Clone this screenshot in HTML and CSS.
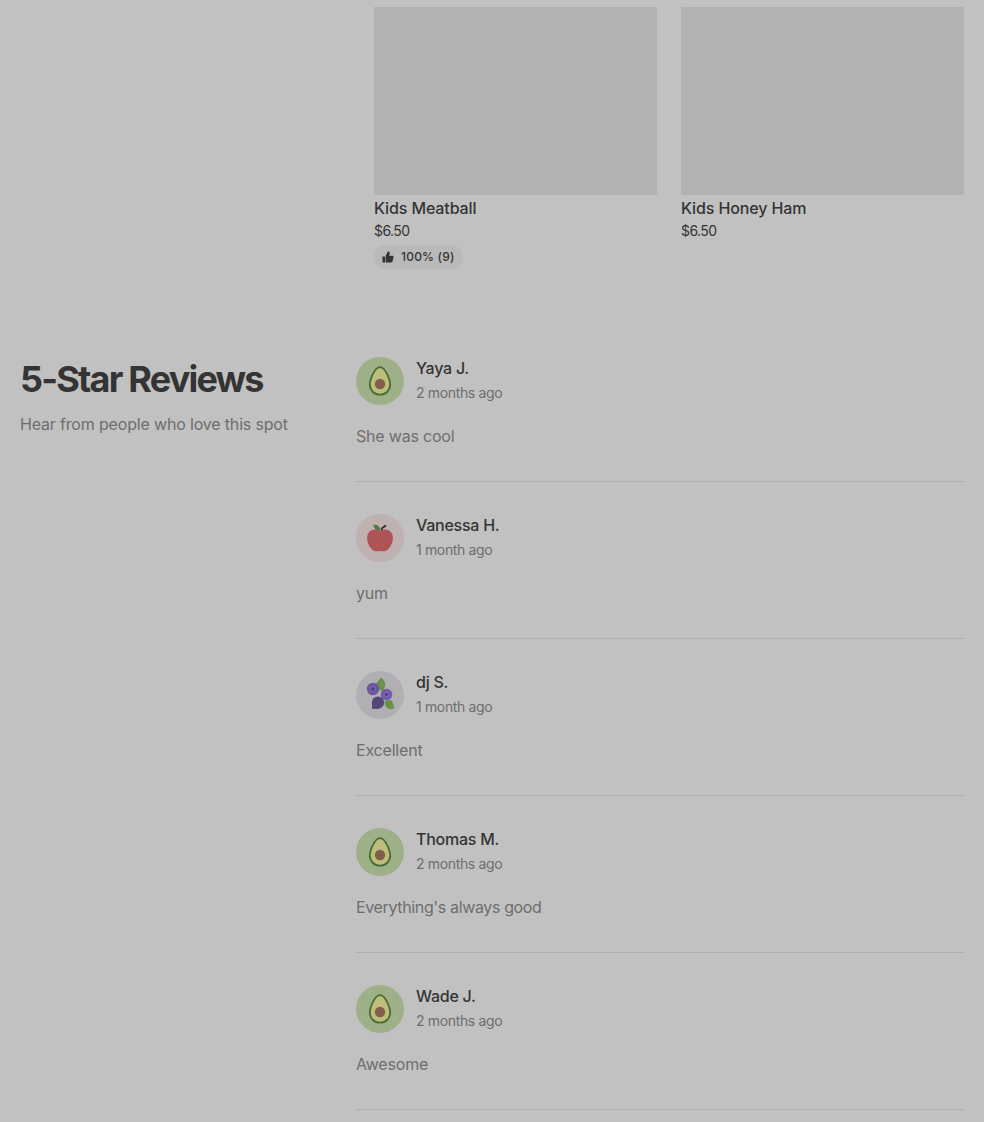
FILE: index.html
```html
<!DOCTYPE html>
<html lang="en">
<head>
    <meta charset="UTF-8">
    <meta name="viewport" content="width=device-width, initial-scale=1.0">
    <title>Store Menu and Reviews</title>
    <link rel="stylesheet" href="styles.css">
</head>
<body>
    <svg class="sprite" aria-hidden="true">
        <symbol id="avocado" viewBox="0 0 48 48">
            <circle cx="24" cy="24" r="24" fill="#9db087"/>
            <path d="M24 10.100c-3.700 0-5.900 4.200-7.600 8-1.400 3.100-2.600 5.600-2.600 9.200 0 6 4.500 10.400 10.200 10.400s10.200-4.400 10.200-10.400c0-3.600-1.200-6.100-2.600-9.200-1.700-3.800-3.900-8-7.600-8z" fill="#bebd7c" stroke="#486f35" stroke-width="1.800"/>
            <circle cx="24" cy="27" r="5.200" fill="#80604a"/>
        </symbol>
        <symbol id="apple" viewBox="0 0 48 48">
            <circle cx="24" cy="24" r="24" fill="#c0b1b1"/>
            <path d="M24 17c2.500-1.800 6-2 8.500-.7 3.200 1.600 4.800 5 4.300 9-.6 5.200-3.400 9.700-6.800 11.500-2 1-4 .2-6 .2s-4 .8-6-.2c-3.400-1.800-6.200-6.300-6.800-11.500-.5-4 1.100-7.400 4.300-9 2.500-1.300 6-1.100 8.500.7z" fill="#ae5456"/>
            <path d="M25.300 16.200c.3-1.800 1.200-2.900 2.600-3.300l2-1.400" fill="none" stroke="#302c27" stroke-width="2"/>
            <path d="M24.300 16.500c-3.600.2-6.200-1.400-7-5.600 4-.5 6.700 1.400 7 5.600z" fill="#4f7d3e"/>
        </symbol>
        <symbol id="blueberry" viewBox="0 0 48 48">
            <circle cx="24" cy="24" r="24" fill="#b1afb3"/>
            <path d="M25 6.500c4.800 4 6 8.500 1.500 13.500-4-1-6.500-3-6.500-6.500 0-2.500 3.500-4 5-7z" fill="#6b924b"/>
            <path d="M28.500 30.500c5.500-4 9-1.500 9.500 7-5 2-9.500-.8-9.500-7z" fill="#6b924b"/>
            <circle cx="17" cy="18" r="6.200" fill="#6d56a0"/>
            <circle cx="30.500" cy="23.500" r="5.800" fill="#755caa"/>
            <circle cx="22" cy="31.700" r="6.200" fill="#544778"/>
            <path d="M16 37.900v-6h6v6z" fill="#544778"/>
            <circle cx="17" cy="18" r="2.400" fill="#4f3f85" stroke="#8b78b8" stroke-width="0.800"/>
            <circle cx="30.500" cy="23.500" r="2.200" fill="#4f3f85" stroke="#8b78b8" stroke-width="0.800"/>
        </symbol>
    </svg>

    <main class="page">
        <section class="menu">
            <article class="menu-item">
                <div class="menu-photo"></div>
                <h3>Kids Meatball</h3>
                <p class="price">$6.50</p>
                <div class="rating">
                    <svg class="thumb" viewBox="0 0 12 12">
                        <path d="M0.500 5.500h2.600v6H0.500zM3.700 4.700 5.900.5C7.300.4 8 1.300 7.700 2.500L7.200 4.700h3.100c1 0 1.500.8 1.300 1.700l-1.100 3.900c-.2.800-.8 1.200-1.500 1.200H3.700z" fill="currentColor"/>
                    </svg>
                    <span>100% (9)</span>
                </div>
            </article>
            <article class="menu-item">
                <div class="menu-photo"></div>
                <h3>Kids Honey Ham</h3>
                <p class="price">$6.50</p>
            </article>
        </section>

        <section class="reviews">
            <header class="reviews-header">
                <h2>5-Star Reviews</h2>
                <p>Hear from people who love this spot</p>
            </header>

            <div class="review-list">
                <article class="review">
                    <div class="reviewer">
                        <svg class="avatar"><use href="#avocado"/></svg>
                        <div>
                            <h4>Yaya J.</h4>
                            <time>2 months ago</time>
                        </div>
                    </div>
                    <p>She was cool</p>
                </article>
                <article class="review">
                    <div class="reviewer">
                        <svg class="avatar"><use href="#apple"/></svg>
                        <div>
                            <h4>Vanessa H.</h4>
                            <time>1 month ago</time>
                        </div>
                    </div>
                    <p>yum</p>
                </article>
                <article class="review">
                    <div class="reviewer">
                        <svg class="avatar"><use href="#blueberry"/></svg>
                        <div>
                            <h4>dj S.</h4>
                            <time>1 month ago</time>
                        </div>
                    </div>
                    <p>Excellent</p>
                </article>
                <article class="review">
                    <div class="reviewer">
                        <svg class="avatar"><use href="#avocado"/></svg>
                        <div>
                            <h4>Thomas M.</h4>
                            <time>2 months ago</time>
                        </div>
                    </div>
                    <p class="long">Everything's always good</p>
                </article>
                <article class="review">
                    <div class="reviewer">
                        <svg class="avatar"><use href="#avocado"/></svg>
                        <div>
                            <h4>Wade J.</h4>
                            <time>2 months ago</time>
                        </div>
                    </div>
                    <p>Awesome</p>
                </article>
            </div>
        </section>
    </main>
</body>
</html>
```
FILE: styles.css
```css
:root {
    --background-color: #c1c1c1;
    --photo-color: #b2b2b2;
    --pill-color: #b9b9b9;
    --line-color: #b0b0b0;
    --text-color: #343434;
    --muted-color: #6e6e6e;
}

* {
    box-sizing: border-box;
    margin: 0;
    padding: 0;
}

body {
    background-color: var(--background-color);
    color: var(--text-color);
    font-family: Inter, "Liberation Sans", sans-serif;
    font-size: 16px;
    line-height: 24px;
}

.sprite {
    display: none;
}

.page {
    height: 1122px;
    padding: 7px 20px 0;
    overflow: hidden;
}

.menu {
    display: grid;
    grid-template-columns: 1fr 1fr;
    gap: 24px;
    height: 350px;
    margin-left: 354px;
}

.menu-photo {
    height: 188px;
    margin-bottom: 1px;
    background-color: var(--photo-color);
}

.menu-item h3,
.reviewer h4 {
    font-size: 16px;
    font-weight: 500;
    letter-spacing: -0.25px;
}

.menu-item h3 {
    letter-spacing: -0.12px;
}

.price {
    font-size: 14px;
    line-height: 22px;
    letter-spacing: -0.6px;
}

.rating {
    display: flex;
    align-items: center;
    gap: 7px;
    width: fit-content;
    height: 24px;
    margin-top: 3px;
    padding: 0 8px;
    border-radius: 12px;
    background-color: var(--pill-color);
    font-size: 12px;
    font-weight: 500;
    letter-spacing: 0.2px;
}

.thumb {
    width: 12px;
    height: 12px;
}

.reviews {
    display: grid;
    grid-template-columns: 336px 1fr;
}

.reviews-header h2 {
    font-size: 36px;
    font-weight: 700;
    line-height: 44px;
    letter-spacing: -1.8px;
}

.reviews-header p {
    margin-top: 11px;
    color: var(--muted-color);
    letter-spacing: -0.17px;
}

.review {
    margin-bottom: 32px;
    padding-bottom: 33px;
    border-bottom: 1px solid var(--line-color);
}

.review > p {
    margin-top: 19px;
    color: var(--muted-color);
    letter-spacing: -0.2px;
}

.review > p.long {
    letter-spacing: -0.36px;
}

.reviewer {
    display: flex;
    gap: 12px;
    height: 48px;
}

.avatar {
    width: 48px;
    height: 48px;
}

.reviewer h4 {
    line-height: 23px;
}

.reviewer time {
    display: block;
    padding-top: 1px;
    color: var(--muted-color);
    font-size: 14px;
    letter-spacing: -0.35px;
}
```
